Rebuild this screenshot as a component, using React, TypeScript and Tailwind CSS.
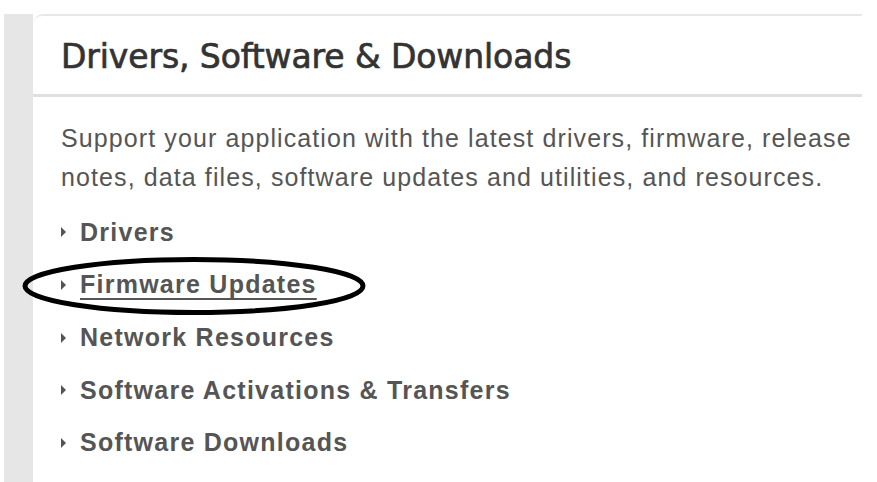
import React from "react";

const LINKS = [
    { label: "Drivers" },
    { label: "Firmware Updates", active: true },
    { label: "Network Resources" },
    { label: "Software Activations & Transfers" },
    { label: "Software Downloads" },
];

function Caret() {
    return (
        <svg width="5" height="10" viewBox="0 0 5 10" className="mr-[14px] shrink-0">
            <path d="M0 0 L5 5 L0 10 Z" fill="#555" />
        </svg>
    );
}

export default function App() {
    return (
        <main className="h-[482px] w-[877px] overflow-hidden bg-white pt-[14px] pl-[4px]">
            <div className="flex h-full">
                {/* left gray rail */}
                <div className="w-[29px] shrink-0 bg-[#e6e6e6]" />

                {/* panel */}
                <section className="mr-[15px] flex-1 rounded-tl-[10px] border-t-2 border-[#e8e8e8] bg-white">
                    <header className="flex h-[81px] items-center border-b-[3px] border-[#e0e0e0] pl-[28px] pt-[4px]">
                        <h1 className="font-['DejaVu_Sans',sans-serif] text-[33px] font-normal tracking-[-0.1px] text-[#333] [-webkit-text-stroke:0.7px_#333]">
                            Drivers, Software &amp; Downloads
                        </h1>
                    </header>

                    <div className="pl-[28px] pt-[22px]">
                        <p className="font-['Liberation_Sans',Arial,sans-serif] text-[25px] leading-[39px] tracking-[1.1px] text-[#555]">
                            Support your application with the latest drivers, firmware, release
                            <br />
                            notes, data files, software updates and utilities, and resources.
                        </p>

                        <ul className="mt-[9px]">
                            {LINKS.map((l) => (
                                <li key={l.label} className="relative flex h-[52.7px] items-center">
                                    <Caret />
                                    <a
                                        href="#"
                                        className={
                                            "font-['Liberation_Sans',Arial,sans-serif] text-[25px] font-bold tracking-[1.25px] text-[#555] " +
                                            (l.active ? "underline decoration-2 underline-offset-[5px]" : "no-underline")
                                        }
                                    >
                                        {l.label}
                                    </a>
                                    {l.active && (
                                        <svg
                                            width="350"
                                            height="62"
                                            viewBox="0 0 350 62"
                                            className="pointer-events-none absolute left-[-42px] top-[-4px]"
                                        >
                                            <ellipse
                                                cx="175"
                                                cy="31"
                                                rx="169"
                                                ry="26.5"
                                                fill="none"
                                                stroke="#000"
                                                strokeWidth="5"
                                            />
                                        </svg>
                                    )}
                                </li>
                            ))}
                        </ul>
                    </div>
                </section>
            </div>
        </main>
    );
}
